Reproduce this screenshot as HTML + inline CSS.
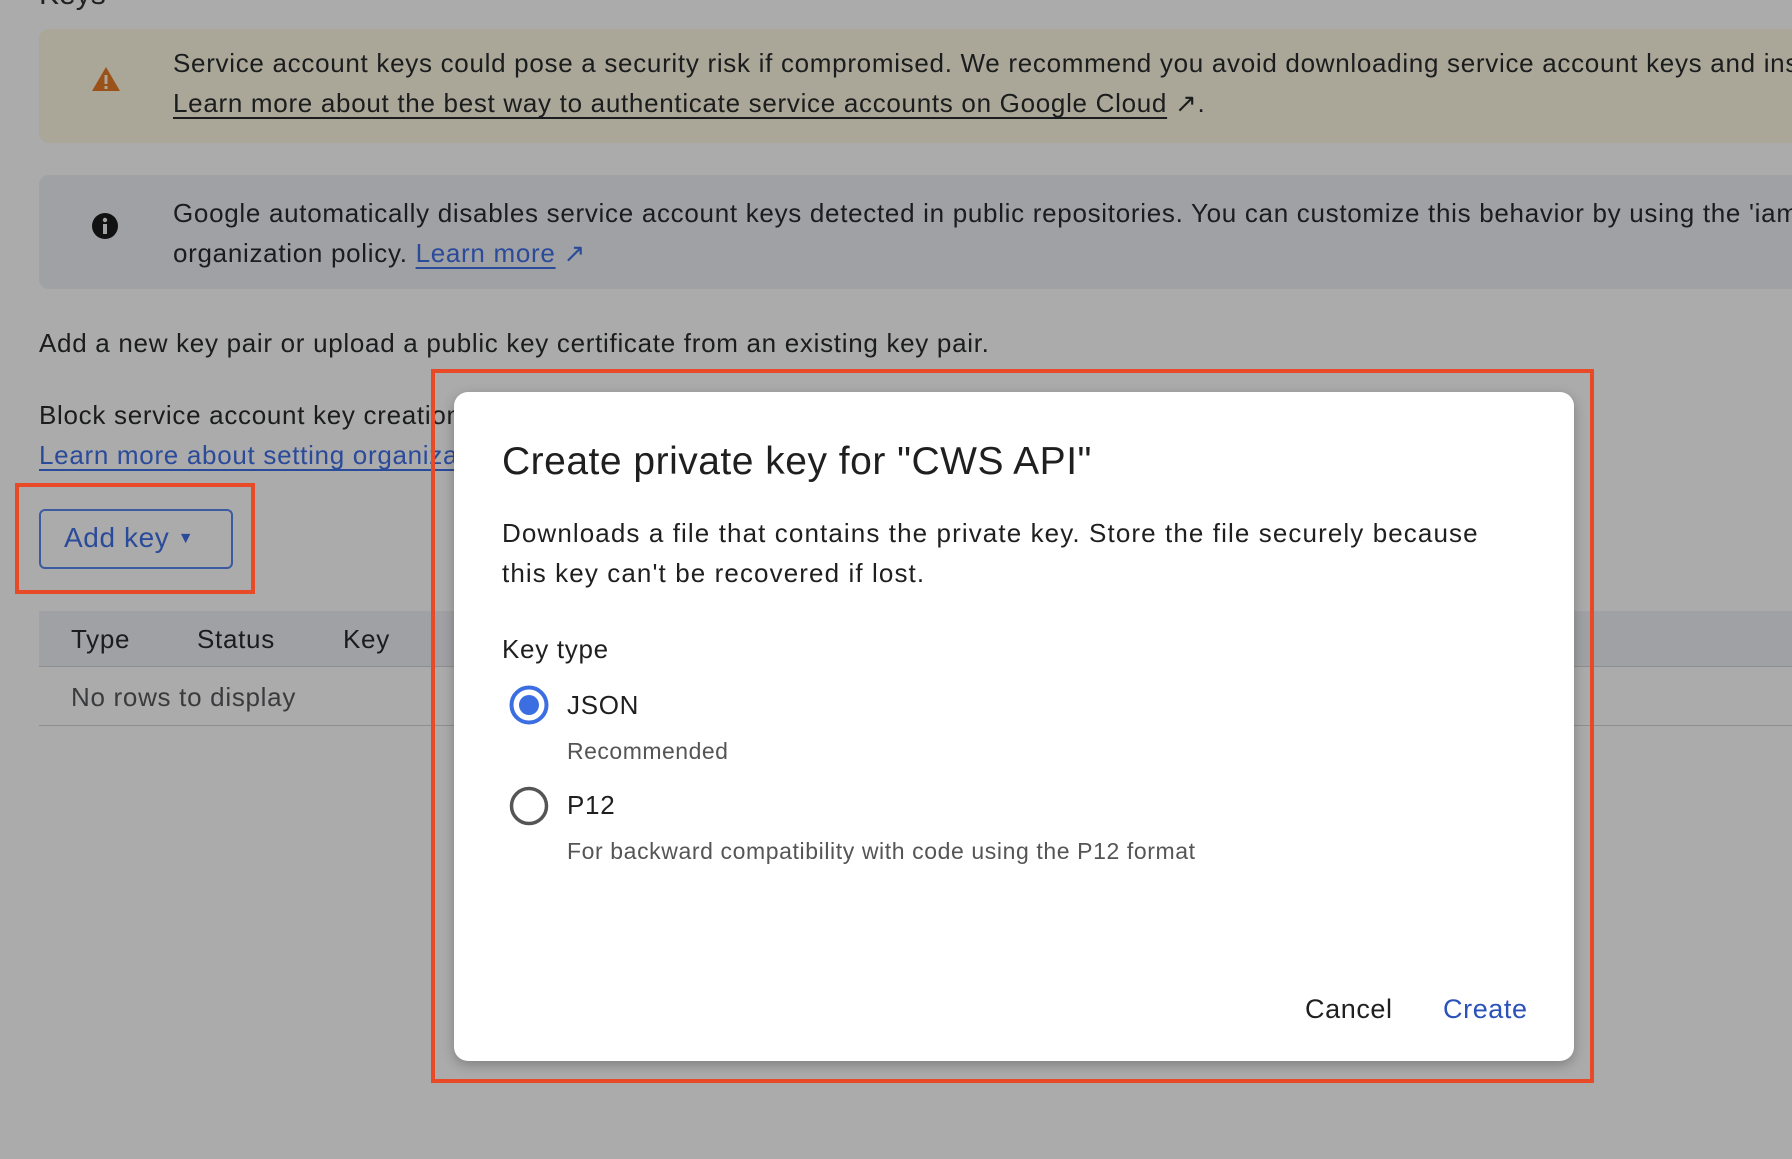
<!DOCTYPE html>
<html><head><meta charset="utf-8"><style>
*{margin:0;padding:0;box-sizing:border-box}
html,body{width:1792px;height:1159px;overflow:hidden;background:#ababab;font-family:"Liberation Sans",Arial,sans-serif;color:#1b1c1d}
#root{position:absolute;left:0;top:0;width:1792px;height:1159px;overflow:hidden}
.abs{position:absolute;white-space:nowrap}
.t{font-size:26px;letter-spacing:0.7px}
a{color:#2a4a9a;text-decoration:underline;text-underline-offset:5px}
</style></head><body><div id="root">
<div class="abs" style="left:39px;top:-22px;font-size:30px;color:#222">Keys</div>
<div class="abs" style="left:39px;top:29px;width:1753px;height:114px;background:#aaa798;border-radius:10px 0 0 10px"></div>
<svg class="abs" style="left:91px;top:66px" width="30" height="26" viewBox="0 0 30 26"><path d="M15 1 L29 25 H1 Z" fill="#9a5218"/><rect x="13.5" y="9" width="3" height="9" fill="#aaa798"/><rect x="13.5" y="20" width="3" height="3" fill="#aaa798"/></svg>
<div class="abs t" style="left:173px;top:48px">Service account keys could pose a security risk if compromised. We recommend you avoid downloading service account keys and instead</div>
<div class="abs t" style="left:173px;top:88px"><a style="color:#1b1c1d">Learn more about the best way to authenticate service accounts on Google Cloud</a> ↗.</div>
<div class="abs" style="left:39px;top:175px;width:1753px;height:114px;background:#a0a1a5;border-radius:10px 0 0 10px"></div>
<svg class="abs" style="left:92px;top:213px" width="26" height="26" viewBox="0 0 26 26"><circle cx="13" cy="13" r="13" fill="#111"/><rect x="11" y="11" width="4" height="10" fill="#a0a1a5"/><circle cx="13" cy="7" r="2.2" fill="#a0a1a5"/></svg>
<div class="abs t" style="left:173px;top:198px">Google automatically disables service account keys detected in public repositories. You can customize this behavior by using the 'iam.serviceAccountKeyExposureResponse'</div>
<div class="abs t" style="left:173px;top:238px">organization policy. <a>Learn more</a> <span style="color:#2a4a9a">↗</span></div>
<div class="abs t" style="left:39px;top:328px">Add a new key pair or upload a public key certificate from an existing key pair.</div>
<div class="abs t" style="left:39px;top:400px">Block service account key creation using organization policies.</div>
<div class="abs t" style="left:39px;top:440px"><a>Learn more about setting organization policies for service accounts</a></div>
<div class="abs" style="left:39px;top:509px;width:194px;height:60px;border:2px solid #3b5aa0;border-radius:6px"></div>
<div class="abs" style="left:64px;top:522px;font-size:28px;color:#2a4a9a;letter-spacing:0.6px">Add key <span style="font-size:16px;vertical-align:4px">▼</span></div>
<div class="abs" style="left:15px;top:483px;width:240px;height:111px;border:4px solid #e84a27"></div>
<div class="abs" style="left:39px;top:611px;width:1753px;height:56px;background:#a0a1a4;border-bottom:1px solid #8d8e90"></div>
<div class="abs t" style="left:71px;top:624px">Type</div>
<div class="abs t" style="left:197px;top:624px">Status</div>
<div class="abs t" style="left:343px;top:624px">Key</div>
<div class="abs t" style="left:71px;top:682px;color:#3a3b3d">No rows to display</div>
<div class="abs" style="left:39px;top:725px;width:1753px;height:1px;background:#8d8e90"></div>
<div class="abs" style="left:431px;top:369px;width:1163px;height:714px;border:4px solid #e84a27"></div>
<div class="abs" style="left:454px;top:392px;width:1120px;height:669px;background:#fff;border-radius:14px;box-shadow:0 4px 12px rgba(0,0,0,.25)"></div>
<div class="abs" style="left:502px;top:440px;font-size:39px;color:#1f1f1f;letter-spacing:0.5px">Create private key for "CWS API"</div>
<div class="abs t" style="left:502px;top:518px;color:#1f1f1f;letter-spacing:1.1px">Downloads a file that contains the private key. Store the file securely because</div>
<div class="abs t" style="left:502px;top:558px;color:#1f1f1f;letter-spacing:1.1px">this key can't be recovered if lost.</div>
<div class="abs t" style="left:502px;top:634px;color:#1f1f1f">Key type</div>
<svg class="abs" style="left:509px;top:685px" width="40" height="40"><circle cx="20" cy="20" r="17.5" fill="none" stroke="#3b6ee0" stroke-width="4"/><circle cx="20" cy="20" r="10" fill="#3b6ee0"/></svg>
<div class="abs t" style="left:567px;top:690px;color:#1f1f1f">JSON</div>
<div class="abs" style="left:567px;top:738px;font-size:23px;color:#555;letter-spacing:0.5px">Recommended</div>
<svg class="abs" style="left:509px;top:786px" width="40" height="40"><circle cx="20" cy="20" r="17.5" fill="none" stroke="#555" stroke-width="3.5"/></svg>
<div class="abs t" style="left:567px;top:790px;color:#1f1f1f">P12</div>
<div class="abs" style="left:567px;top:838px;font-size:23px;color:#555;letter-spacing:0.6px">For backward compatibility with code using the P12 format</div>
<div class="abs" style="left:1305px;top:994px;font-size:27px;color:#1f1f1f;letter-spacing:0.6px">Cancel</div>
<div class="abs" style="left:1443px;top:994px;font-size:27px;color:#2a52b8;letter-spacing:0.6px">Create</div>
</div></body></html>
